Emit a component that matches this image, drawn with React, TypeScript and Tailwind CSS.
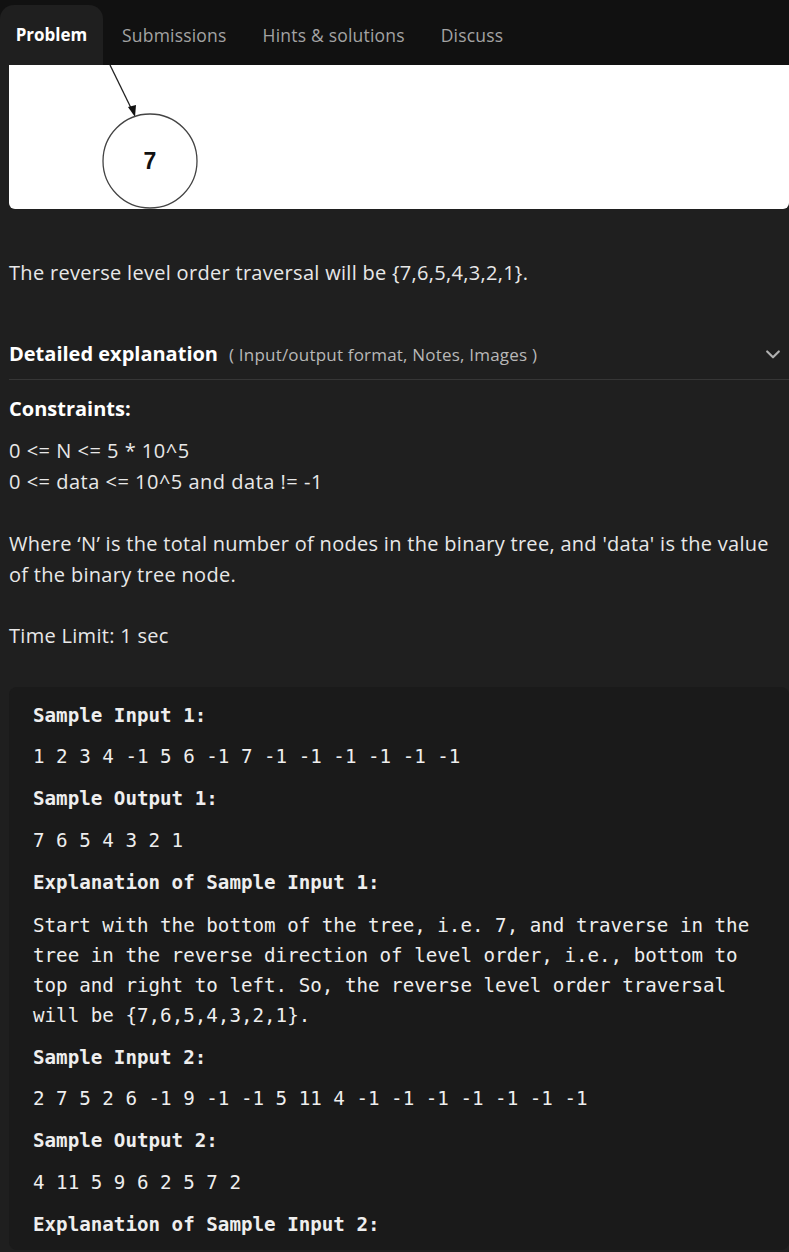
import React from "react";

const sans = { fontFamily: "'Open Sans', 'Noto Sans', sans-serif" };
const mono = { fontFamily: "'DejaVu Sans Mono', 'Liberation Mono', monospace" };

export default function App() {
  return (
    <div className="min-h-[1252px] bg-[#1f1f1f] text-[#e8e8e8]" style={sans}>
      {/* Tabs */}
      <div className="h-[65px] bg-[#111111] flex items-end">
        <div className="h-[60px] w-[103px] bg-[#1f1f1f] rounded-t-[14px] flex items-center justify-center text-[17px] font-bold text-white">
          Problem
        </div>
        <div className="flex items-center h-[60px] text-[17.5px] text-[#a3a3a3] tracking-[0.2px]">
          <span className="ml-[19px]">Submissions</span>
          <span className="ml-[36px]">Hints &amp; solutions</span>
          <span className="ml-[36px]">Discuss</span>
        </div>
      </div>

      <div className="pl-[9px]">
        {/* Image */}
        <div className="h-[144px] bg-white rounded-b-[6px] overflow-hidden">
          <svg width="780" height="144" viewBox="0 0 780 144">
            <line x1="101" y1="0" x2="123" y2="45" stroke="#222" strokeWidth="1.3" />
            <polygon points="126,52 119,42 127,40" fill="#111" />
            <ellipse cx="141" cy="96" rx="47" ry="47" fill="white" stroke="#444" strokeWidth="1.3" />
            <text x="141" y="104" textAnchor="middle" fontFamily="Liberation Sans, Arial, sans-serif" fontWeight="bold" fontSize="23" fill="#111">7</text>
          </svg>
        </div>

        <p className="mt-[48px] text-[20px] leading-[31px] tracking-[0.3px]">
          The reverse level order traversal will be {"{7,6,5,4,3,2,1}"}.
        </p>

        <div className="mt-[51px] flex items-center justify-between pb-[10px] border-b border-[#363636]">
          <div className="flex items-baseline">
            <span className="text-[20px] font-bold text-white">Detailed explanation</span>
            <span className="ml-[11px] text-[17px] text-[#b8b8b8] tracking-[0.2px]">( Input/output format, Notes, Images )</span>
          </div>
          <svg width="20" height="20" viewBox="0 0 24 24" className="mr-[6px]" fill="none" stroke="#b0b0b0" strokeWidth="2.6" strokeLinecap="round" strokeLinejoin="round">
            <path d="M5 9l7 7 7-7" />
          </svg>
        </div>

        <div className="mt-[13px] text-[20px] font-bold leading-[31px] text-white">Constraints:</div>
        <div className="mt-[11px] text-[20px] leading-[31px] tracking-[0.5px]">
          <div>0 &lt;= N &lt;= 5 * 10^5</div>
          <div>0 &lt;= data &lt;= 10^5 and data != -1</div>
        </div>
        <p className="mt-[31px] text-[20px] leading-[31px] pr-[10px] tracking-[0.3px]">
          Where ‘N’ is the total number of nodes in the binary tree, and 'data' is the value of the binary tree node.
        </p>
        <p className="mt-[30px] text-[20px] leading-[31px] tracking-[0.3px]">Time Limit: 1 sec</p>

        {/* Code block */}
        <div className="mt-[36px] bg-[#1a1a1a] rounded-[8px] pl-[24px] pr-[30px] pt-[14px] pb-[10px] text-[19.2px] leading-[30px] text-[#eeeeee]" style={mono}>
          <div className="font-bold">Sample Input 1:</div>
          <div className="mt-[11px]">1 2 3 4 -1 5 6 -1 7 -1 -1 -1 -1 -1 -1</div>
          <div className="mt-[12px] font-bold">Sample Output 1:</div>
          <div className="mt-[12px]">7 6 5 4 3 2 1</div>
          <div className="mt-[12px] font-bold">Explanation of Sample Input 1:</div>
          <div className="mt-[13px]">
            Start with the bottom of the tree, i.e. 7, and traverse in the tree in the reverse direction of level order, i.e., bottom to top and right to left. So, the reverse level order traversal will be {"{7,6,5,4,3,2,1}"}.
          </div>
          <div className="mt-[12px] font-bold">Sample Input 2:</div>
          <div className="mt-[11px]">2 7 5 2 6 -1 9 -1 -1 5 11 4 -1 -1 -1 -1 -1 -1 -1</div>
          <div className="mt-[12px] font-bold">Sample Output 2:</div>
          <div className="mt-[12px]">4 11 5 9 6 2 5 7 2</div>
          <div className="mt-[12px] font-bold">Explanation of Sample Input 2:</div>
        </div>
      </div>
    </div>
  );
}
